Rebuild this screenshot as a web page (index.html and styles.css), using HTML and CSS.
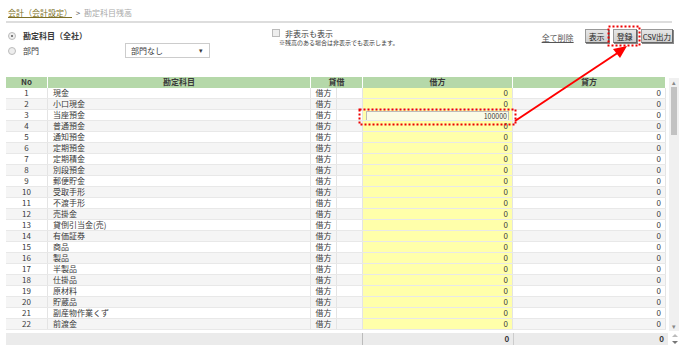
FILE: index.html
```html
<!DOCTYPE html>
<html lang="ja">
<head>
    <meta charset="UTF-8">
    <title>勘定科目残高</title>
    <link rel="stylesheet" href="styles.css">
</head>
<body>
    <div class="page">
        <!-- Breadcrumb -->
        <div class="breadcrumb">
            <a href="#">会計（会計設定）</a>
            <span class="sep">&gt;</span>
            <span class="current">勘定科目残高</span>
        </div>

        <!-- Controls -->
        <div class="controls">
            <div class="filters">
                <label class="radio-row">
                    <span class="radio checked"></span>
                    <b>勘定科目（全社）</b>
                </label>
                <div class="radio-row">
                    <span class="radio"></span>
                    <span class="radio-label">部門</span>
                    <div class="select">部門なし<span class="caret">▾</span></div>
                </div>
            </div>
            <div class="hidden-opt">
                <div class="check-row"><span class="checkbox"></span>非表示も表示</div>
                <div class="note">※残高のある場合は非表示でも表示します。</div>
            </div>
            <div class="actions">
                <a href="#" class="clear-link">全て削除</a>
                <button class="btn">表示</button>
                <button class="btn">登録</button>
                <button class="btn btn-csv">CSV出力</button>
            </div>
        </div>

        <!-- Balance table -->
        <div class="table-wrap">
            <div class="grid">
                <div class="row head">
                    <div>No</div>
                    <div>勘定科目</div>
                    <div class="span2">貸借</div>
                    <div>借方</div>
                    <div>貸方</div>
                </div>
                <div id="rows"></div>
            </div>
            <div class="scrollbar">
                <span class="arr">▴</span>
                <span class="thumb"></span>
                <span class="track"></span>
                <span class="arr">▾</span>
            </div>
        </div>
        <div class="footer">
            <div class="f-left"></div>
            <div class="f-num">0</div>
            <div class="f-num last">0</div>
            <svg class="spin" width="6" height="10" viewBox="0 0 6 10">
                <polygon points="3,0 6,3 0,3" fill="#bbb"/>
                <polygon points="0,7 6,7 3,10" fill="#777"/>
            </svg>
        </div>
    </div>

    <!-- Annotation overlay -->
    <svg class="annot" width="685" height="353" viewBox="0 0 685 353">
        <rect x="608.5" y="26.5" width="31" height="19" fill="none" stroke="#e00" stroke-width="2" stroke-dasharray="2 2"/>
        <rect x="359.5" y="109.5" width="156" height="15" fill="none" stroke="#e00" stroke-width="2" stroke-dasharray="2 2"/>
        <line x1="515" y1="121" x2="619" y2="52" stroke="#f00" stroke-width="2"/>
        <polygon points="627,46 613,49 620,58" fill="#f00"/>
    </svg>

    <script>
        const accounts = ['現金', '小口現金', '当座預金', '普通預金', '通知預金', '定期預金', '定期積金',
            '別段預金', '郵便貯金', '受取手形', '不渡手形', '売掛金', '貸倒引当金(売)', '有価証券',
            '商品', '製品', '半製品', '仕掛品', '原材料', '貯蔵品', '副産物作業くず', '前渡金'];

        const rows = document.getElementById('rows');
        accounts.forEach((name, i) => {
            const row = document.createElement('div');
            row.className = 'row' + (i % 2 ? ' alt' : '');
            const debit = i === 2
                ? '<div class="debit"><span class="input">100000</span></div>'
                : '<div class="debit num">0</div>';
            row.innerHTML = `
                <div class="no">${i + 1}</div>
                <div class="name">${name}</div>
                <div class="side">借方</div>
                <div></div>
                ${debit}
                <div class="num">0</div>
            `;
            rows.appendChild(row);
        });
    </script>
</body>
</html>
```

FILE: styles.css
```css
body {
    margin: 0;
    font-family: "Noto Sans CJK JP", "Liberation Sans", sans-serif;
    font-size: 8px;
    color: #3a3a3a;
    background: #fff;
    width: 685px;
    height: 353px;
    overflow: hidden;
}

.page {
    padding: 0 6px;
}

.breadcrumb {
    height: 21px;
    line-height: 26px;
    border-bottom: 2px solid #ddd;
    width: 666px;
}

.breadcrumb a {
    color: #7d6f25;
    text-decoration: underline;
    margin-left: 2px;
}

.breadcrumb .sep {
    color: #555;
    margin: 0 2px;
}

.breadcrumb .current {
    color: #aaa;
}

.controls {
    display: flex;
    height: 54px;
}

.filters {
    width: 260px;
    flex-shrink: 0;
    padding-top: 5px;
}

.radio-row {
    display: flex;
    align-items: center;
    height: 15px;
}

.radio {
    width: 6px;
    height: 6px;
    border: 1px solid #bbb;
    border-radius: 50%;
    background: #eee;
    margin: 0 7px 0 2px;
    position: relative;
}

.radio.checked::after {
    content: "";
    position: absolute;
    left: 2px;
    top: 2px;
    width: 2px;
    height: 2px;
    border-radius: 50%;
    background: #555;
}

.radio-label {
    width: 102px;
}

.select {
    width: 78px;
    height: 13px;
    line-height: 13px;
    border: 1px solid #ccc;
    padding-left: 5px;
    position: relative;
}

.select .caret {
    position: absolute;
    right: 6px;
    top: 0;
    font-size: 7px;
}

.hidden-opt {
    flex: 1;
    padding: 4px 0 0 6px;
}

.check-row {
    display: flex;
    align-items: center;
    height: 12px;
}

.checkbox {
    width: 6px;
    height: 6px;
    border: 1px solid #bbb;
    background: #eee;
    margin: 0 5px 0 0;
}

.note {
    font-size: 6px;
    margin-left: 7px;
    line-height: 8px;
}

.actions {
    display: flex;
    flex-shrink: 0;
    align-items: flex-start;
    gap: 4px;
    padding: 6px 6px 0 0;
    white-space: nowrap;
}

.clear-link {
    color: #555;
    text-decoration: underline;
    margin: 3px 7px 0 0;
}

.btn {
    font-family: inherit;
    font-size: 8px;
    color: #222;
    height: 14px;
    padding: 0 3px;
    margin: 0;
    border: 1px solid #999;
    border-right-color: #666;
    border-bottom-color: #666;
    background: linear-gradient(#e6e6e6, #cfcfcf);
    box-shadow: 1px 1px 0 #888;
    line-height: 11px;
    white-space: nowrap;
}

.btn-csv {
    padding: 0 1px;
    font-size: 7.5px;
}

.table-wrap {
    display: flex;
    gap: 3px;
}

.grid {
    width: 660px;
}

.row {
    display: grid;
    grid-template-columns: 42px 263px 26px 26px 150px 153px;
    height: 11px;
    line-height: 10px;
    border-bottom: 1px solid #e8e8e8;
    box-sizing: border-box;
}

.row > div {
    border-right: 1px solid #e4e4e4;
    overflow: hidden;
    white-space: nowrap;
}

.row.alt {
    background: #f5f5f5;
}

.row.head {
    height: 11px;
    background: #b5d8a9;
    font-weight: bold;
    text-align: center;
    border-bottom: 0;
}

.row.head > div {
    border-right: 1px solid #fff;
}

.row.head .span2 {
    grid-column: span 2;
}

.no {
    text-align: center;
}

.name {
    padding-left: 5px;
}

.side {
    text-align: center;
}

.num {
    text-align: right;
    padding-right: 4px;
}

.debit {
    background: #ffffaa;
}

.input {
    display: block;
    margin: 1px 3px 0 3px;
    height: 8px;
    line-height: 8px;
    border: 1px solid #bbb;
    background: #fbfbe8;
    text-align: right;
    padding-right: 1px;
    font-size: 7px;
}

.scrollbar {
    width: 11px;
    height: 253px;
    display: flex;
    flex-direction: column;
    background: #f0f0f0;
    margin-top: 1px;
}

.scrollbar .arr {
    height: 9px;
    font-size: 7px;
    line-height: 9px;
    text-align: center;
    color: #888;
}

.scrollbar .thumb {
    height: 48px;
    background: #c2c2c2;
    margin: 0 2px;
}

.scrollbar .track {
    flex: 1;
}

.footer {
    display: flex;
    height: 12px;
    line-height: 12px;
    margin-top: 2px;
    background: #ebebeb;
    width: 662px;
    font-weight: bold;
    position: relative;
}

.f-left {
    width: 357px;
    border-right: 1px solid #bbb;
}

.f-num {
    width: 146px;
    text-align: right;
    padding-right: 4px;
    border-right: 1px solid #ccc;
}

.f-num.last {
    width: 150px;
    border-right: 0;
}

.spin {
    position: absolute;
    right: -10px;
    top: 1px;
}

.annot {
    position: absolute;
    left: 0;
    top: 0;
    pointer-events: none;
}
```
